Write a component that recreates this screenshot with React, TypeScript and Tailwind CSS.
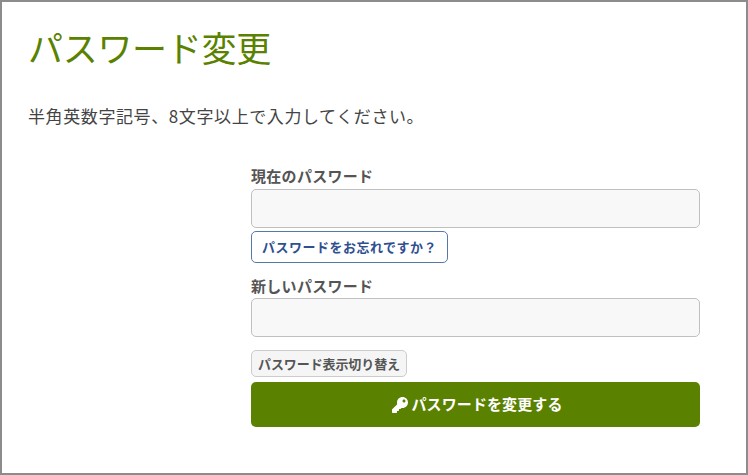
import React from 'react';
import { FaKey } from 'react-icons/fa';

const App: React.FC = () => {
  return (
    <div className="w-[748px] h-[475px] bg-white border-2 border-[#8c8c8c] text-[#444444] font-['Noto_Sans_CJK_JP','Noto_Sans',sans-serif] overflow-hidden">
      <div className="pl-[26px] pr-[46px]">
        {/* Heading */}
        <h1 className="mt-[20px] text-[35px] leading-[50px] tracking-[-0.3px] text-[#5a8200]">パスワード変更</h1>
        <p className="mt-[32px] text-[17px] leading-[24px] tracking-[0.6px]">半角英数字記号、8文字以上で入力してください。</p>

        {/* Form */}
        <form className="ml-[223px] mt-[38px] w-[449px]">
          <label className="block text-[15px] leading-[20px] font-bold tracking-[0.3px] text-[#555555]">現在のパスワード</label>
          <input type="text" className="block mt-[3px] w-full h-[39px] bg-[#f8f8f8] border border-[#c0c0c0] rounded-[5px]" />
          <button type="button" className="block mt-[3px] h-[32px] w-[197px] bg-white border border-[#5579ad] rounded-[5px] text-[13px] font-bold tracking-[0.5px] text-[#2f4f8f]">
            パスワードをお忘れですか？
          </button>

          <label className="block mt-[13px] text-[15px] leading-[20px] font-bold tracking-[0.3px] text-[#555555]">新しいパスワード</label>
          <input type="text" className="block mt-[2px] w-full h-[39px] bg-[#f8f8f8] border border-[#c0c0c0] rounded-[5px]" />

          <button type="button" className="block mt-[13px] h-[27px] w-[156px] bg-[#f5f5f5] border border-[#cccccc] rounded-[5px] text-[13px] font-bold tracking-[-0.1px] text-[#555555]">
            パスワード表示切り替え
          </button>
          <button type="submit" className="flex items-center justify-center gap-[3px] mt-[5px] pl-[4px] w-full h-[45px] bg-[#5a8200] rounded-[5px] text-[15px] font-bold tracking-[0.1px] text-white">
            <FaKey className="text-[16px]" />
            パスワードを変更する
          </button>
        </form>
      </div>
    </div>
  );
};

export default App;
